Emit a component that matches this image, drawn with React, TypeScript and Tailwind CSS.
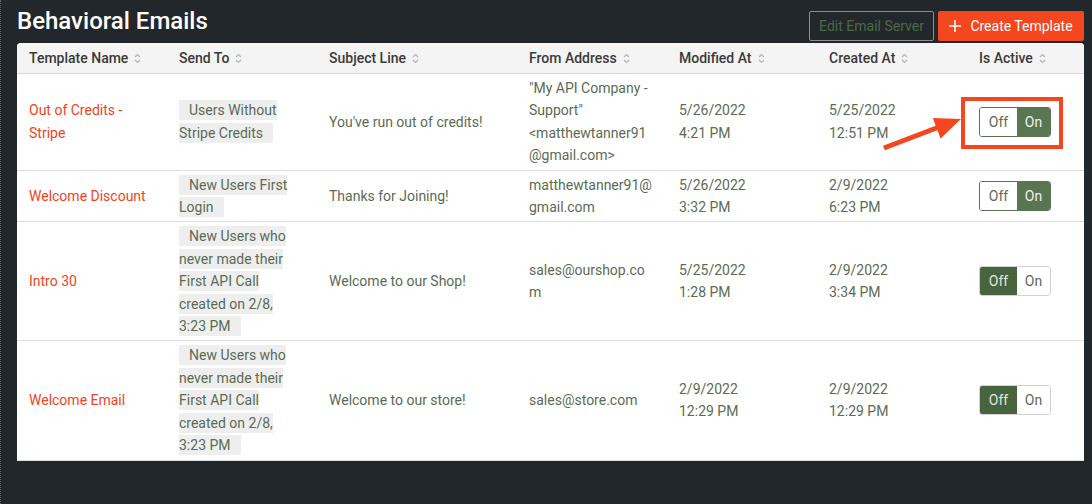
import React from 'react';

type Row = {
  name: string;
  sendTo: string;
  subject: string;
  from: string;
  modified: [string, string];
  created: [string, string];
  active: boolean;
  highlight?: boolean;
};

const rows: Row[] = [
  {
    name: 'Out of Credits - Stripe',
    sendTo: 'Users Without Stripe Credits',
    subject: "You've run out of credits!",
    from: '"My API Company - Support" <matthewtanner91@gmail.com>',
    modified: ['5/26/2022', '4:21 PM'],
    created: ['5/25/2022', '12:51 PM'],
    active: true,
    highlight: true,
  },
  {
    name: 'Welcome Discount',
    sendTo: 'New Users First Login',
    subject: 'Thanks for Joining!',
    from: 'matthewtanner91@gmail.com',
    modified: ['5/26/2022', '3:32 PM'],
    created: ['2/9/2022', '6:23 PM'],
    active: true,
  },
  {
    name: 'Intro 30',
    sendTo: 'New Users who never made their First API Call created on 2/8, 3:23 PM',
    subject: 'Welcome to our Shop!',
    from: 'sales@ourshop.com',
    modified: ['5/25/2022', '1:28 PM'],
    created: ['2/9/2022', '3:34 PM'],
    active: false,
  },
  {
    name: 'Welcome Email',
    sendTo: 'New Users who never made their First API Call created on 2/8, 3:23 PM',
    subject: 'Welcome to our store!',
    from: 'sales@store.com',
    modified: ['2/9/2022', '12:29 PM'],
    created: ['2/9/2022', '12:29 PM'],
    active: false,
  },
];

const headers = ['Template Name', 'Send To', 'Subject Line', 'From Address', 'Modified At', 'Created At', 'Is Active'];

function SortIcon() {
  return (
    <svg width="7" height="11" viewBox="0 0 7 11" fill="none" stroke="#b3b3b3" strokeWidth="1.1" className="ml-[6px]">
      <path d="M1 4 L3.5 1.5 L6 4" />
      <path d="M1 7 L3.5 9.5 L6 7" />
    </svg>
  );
}

function Toggle({ active }: { active: boolean }) {
  if (active) {
    return (
      <div className="flex h-[30px] w-[72px] overflow-hidden rounded-[3px] border border-[#5a7552] text-[14px]">
        <div className="flex w-[37px] items-center justify-center bg-white text-[#5b6b55]">Off</div>
        <div className="flex flex-1 items-center justify-center bg-[#5a7552] text-[#eef2ec]">On</div>
      </div>
    );
  }
  return (
    <div className="flex h-[30px] w-[72px] overflow-hidden rounded-[3px] border border-[#d2d2d2] text-[14px]">
      <div className="flex w-[37px] items-center justify-center bg-[#48643f] text-[#dfe8dc]">Off</div>
      <div className="flex flex-1 items-center justify-center bg-white text-[#5b6b55]">On</div>
    </div>
  );
}

const grid = 'grid grid-cols-[150px_150px_200px_150px_150px_150px_1fr]';

export default function App() {
  return (
    <div className="relative min-h-screen w-full border-l border-dotted border-[#62664a] bg-[#22272b] pl-[16px] pr-[8px] font-['Roboto',sans-serif] text-[14px]">
      {/* Title bar */}
      <div className="flex h-[43px] items-start justify-between">
        <h1 className="mt-[5px] text-[24px] font-medium leading-8 text-white">Behavioral Emails</h1>
        <div className="mt-[11px] flex gap-[4px]">
          <button className="h-[30px] w-[125px] rounded-[2px] border border-[#8d8d8d] text-[14px] text-[#4d6846]">
            Edit Email Server
          </button>
          <button className="flex h-[30px] w-[146px] items-center justify-center gap-[9px] rounded-[2px] bg-[#f4461f] text-[14px] text-white">
            <svg width="12" height="12" viewBox="0 0 12 12" stroke="white" strokeWidth="1.6">
              <path d="M6 0 V12 M0 6 H12" />
            </svg>
            Create Template
          </button>
        </div>
      </div>

      {/* Table card */}
      <div className="overflow-hidden rounded-t-[4px] bg-white">
        <div className={`${grid} h-[31px] items-center border-b border-[#dadada] bg-[#f4f4f4]`}>
          {headers.map((h) => (
            <div key={h} className="flex items-center px-3 font-medium text-[#3a3a3a]">
              {h}
              <SortIcon />
            </div>
          ))}
        </div>

        {rows.map((r) => (
          <div key={r.name} className={`${grid} border-b border-[#dedede] leading-[22.4px] text-[#5b6b55]`}>
            <div className="self-center px-3 py-[3px] text-[#f1431c]">{r.name}</div>
            <div className="self-center px-3 py-[3px]">
              <div className="w-[120px]">
                <span className="bg-[#eeeeee] py-[2px] pl-[10px] pr-[10px]">{r.sendTo}</span>
              </div>
            </div>
            <div className="self-center px-3 py-[3px]">{r.subject}</div>
            <div className="self-center break-words px-3 py-[3px]">{r.from}</div>
            <div className="self-center px-3 py-[3px]">
              {r.modified[0]}
              <br />
              {r.modified[1]}
            </div>
            <div className="self-center px-3 py-[3px]">
              {r.created[0]}
              <br />
              {r.created[1]}
            </div>
            <div className="self-center px-3 py-[3px]">
              <div className="relative w-[72px]">
                <Toggle active={r.active} />
                {r.highlight && (
                  <div className="absolute -bottom-[12px] -left-[18px] -right-[12px] -top-[10px] border-4 border-[#f4461f]" />
                )}
              </div>
            </div>
          </div>
        ))}
      </div>

      {/* Callout arrow */}
      <svg className="pointer-events-none absolute left-0 top-0" width="1092" height="504">
        <line x1="883" y1="148" x2="938" y2="127" stroke="#f4461f" strokeWidth="5" />
        <polygon points="960,119 939.6,138.5 931.8,117.9" fill="#f4461f" />
      </svg>
    </div>
  );
}
